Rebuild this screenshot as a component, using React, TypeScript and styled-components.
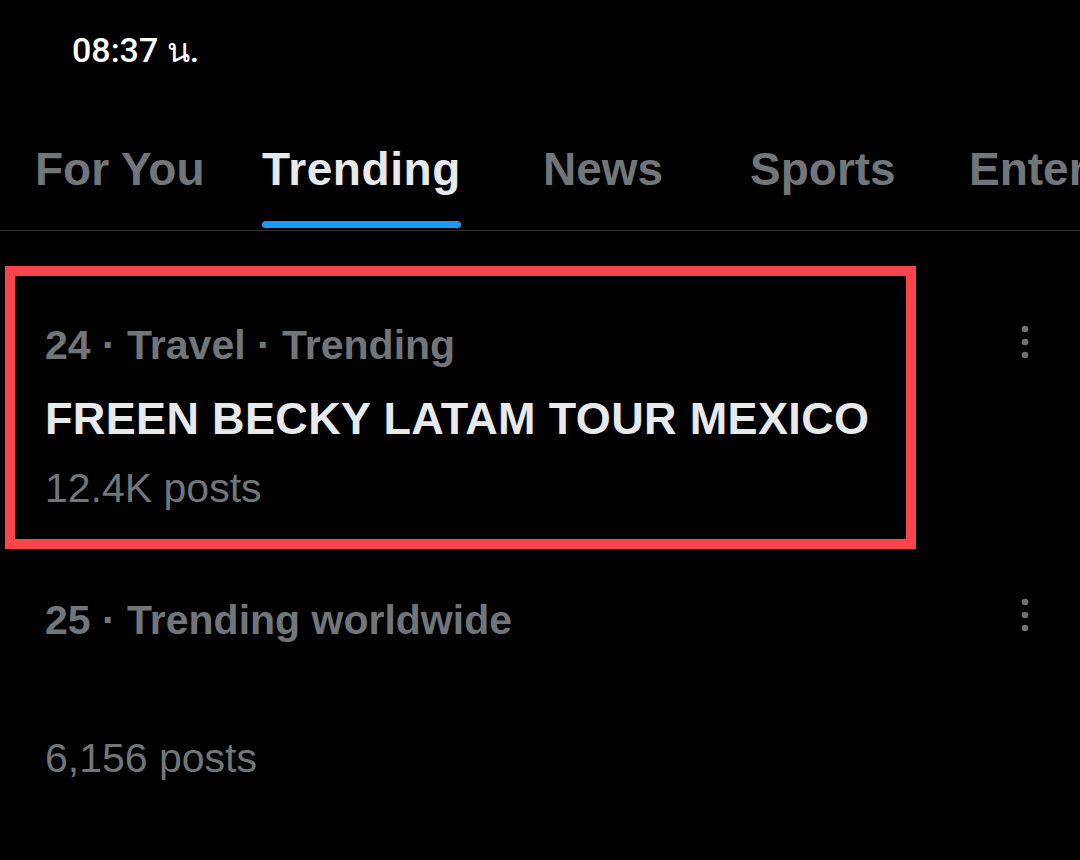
import React from "react";
import styled, { createGlobalStyle } from "styled-components";

const Global = createGlobalStyle`
  html, body { margin: 0; padding: 0; background: #000; }
  body { font-family: "Liberation Sans", Arial, sans-serif; }
  #root { width: 1080px; height: 860px; overflow: hidden; background: #000; }
`;

const Screen = styled.div`
  width: 1080px;
  height: 860px;
  background: #000;
  display: flex;
  flex-direction: column;
  overflow: hidden;
`;

const StatusBar = styled.div`
  height: 100px;
  box-sizing: border-box;
  padding: 30px 0 0 72px;
  font-family: Roboto, "Noto Sans", "DejaVu Sans", sans-serif;
  font-weight: 500;
  font-size: 34px;
  line-height: 40px;
  color: #fff;
`;

const TabBar = styled.nav`
  display: flex;
  padding-left: 35px;
  border-bottom: 1px solid #2f3336;
  white-space: nowrap;
`;

const Tab = styled.div<{ $slot: number }>`
  flex: 0 0 ${(p) => p.$slot}px;
  padding-top: 46px;
`;

const TabInner = styled.div`
  display: inline-flex;
  flex-direction: column;
`;

const TabLabel = styled.span<{ $active?: boolean }>`
  font-size: 46px;
  line-height: 46px;
  font-weight: 700;
  letter-spacing: ${(p) => (p.$active ? "0.6px" : "0")};
  color: ${(p) => (p.$active ? "#e7e9ea" : "#71767b")};
`;

const TabIndicator = styled.span<{ $active?: boolean }>`
  height: 7px;
  margin: 29px 0 2px;
  border-radius: 4px;
  background: ${(p) => (p.$active ? "#1d9bf0" : "transparent")};
`;

const Row = styled.div<{ $inset: number; $top: number }>`
  display: flex;
  justify-content: space-between;
  align-items: flex-start;
  padding: ${(p) => p.$top}px 43px 0 ${(p) => p.$inset}px;
`;

const Highlight = styled.div`
  flex: 0 0 911px;
  box-sizing: border-box;
  border: 10px solid #f94449;
  padding: 44px 20px 26px 30px;
`;

const Content = styled.div`
  flex: 1;
`;

const Meta = styled.div`
  font-size: 41px;
  line-height: 50px;
  font-weight: 700;
  color: #71767b;
  white-space: nowrap;
`;

const Title = styled.div`
  margin-top: 21px;
  font-size: 45px;
  line-height: 56px;
  font-weight: 700;
  letter-spacing: 0.35px;
  color: #e7e9ea;
  white-space: nowrap;
`;

const Count = styled.div<{ $gap: number }>`
  margin-top: ${(p) => p.$gap}px;
  font-size: 41px;
  line-height: 50px;
  font-weight: 400;
  color: #71767b;
  white-space: nowrap;
`;

const MoreButton = styled.div<{ $top: number }>`
  width: 24px;
  margin-top: ${(p) => p.$top}px;
  display: flex;
  justify-content: center;
`;

const Dots = () => (
  <svg width="8" height="34" viewBox="0 0 8 34">
    <circle cx="4" cy="4" r="3.3" fill="#6e7175" />
    <circle cx="4" cy="17" r="3.3" fill="#6e7175" />
    <circle cx="4" cy="30" r="3.3" fill="#6e7175" />
  </svg>
);

const tabs = [
  { label: "For You", slot: 227 },
  { label: "Trending", slot: 281 },
  { label: "News", slot: 207 },
  { label: "Sports", slot: 219 },
  { label: "Enter", slot: 200 },
];

export default function App() {
  return (
    <>
      <Global />
      <Screen>
        <StatusBar>08:37 น.</StatusBar>
        <TabBar>
          {tabs.map((t) => (
            <Tab key={t.label} $slot={t.slot}>
              <TabInner>
                <TabLabel $active={t.label === "Trending"}>{t.label}</TabLabel>
                <TabIndicator $active={t.label === "Trending"} />
              </TabInner>
            </Tab>
          ))}
        </TabBar>
        <Row $inset={5} $top={35}>
          <Highlight>
            <Meta>24 · Travel · Trending</Meta>
            <Title>FREEN BECKY LATAM TOUR MEXICO</Title>
            <Count $gap={16}>12.4K posts</Count>
          </Highlight>
          <MoreButton $top={59}>
            <Dots />
          </MoreButton>
        </Row>
        <Row $inset={45} $top={46}>
          <Content>
            <Meta>25 · Trending worldwide</Meta>
            <Count $gap={88}>6,156 posts</Count>
          </Content>
          <MoreButton $top={3}>
            <Dots />
          </MoreButton>
        </Row>
      </Screen>
    </>
  );
}
